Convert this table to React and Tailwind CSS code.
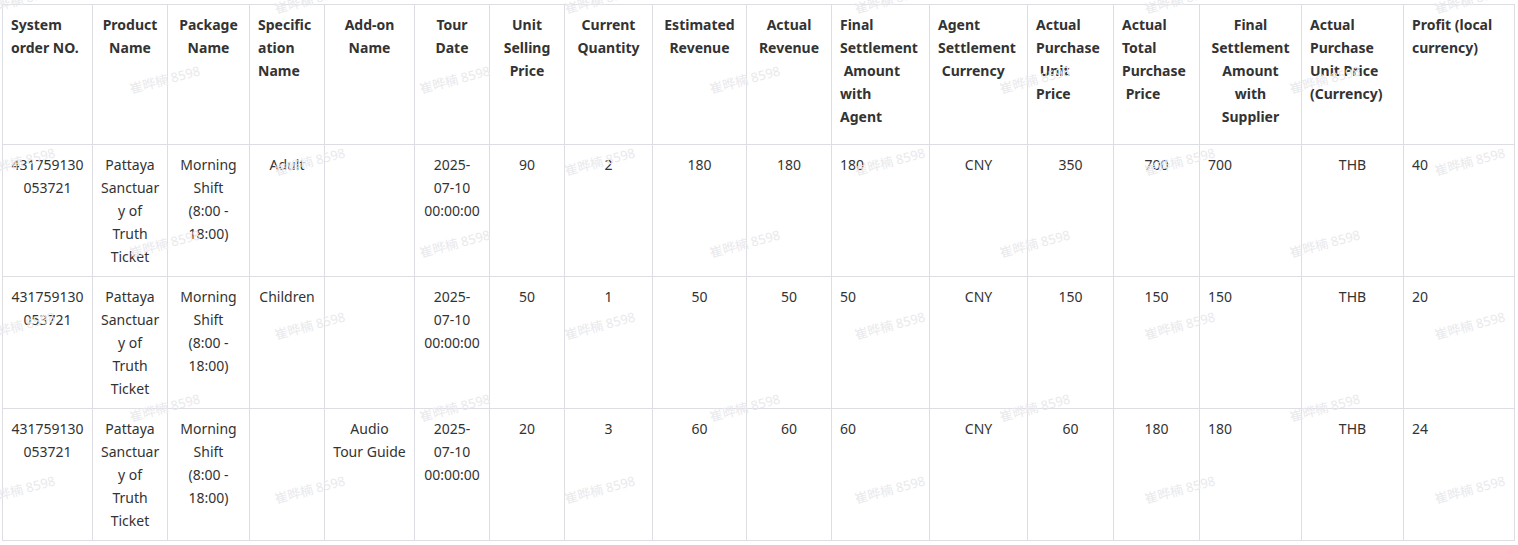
const widths = ["w-[90px]", "w-[75px]", "w-[82px]", "w-[75px]", "w-[90px]", "w-[75px]", "w-[75px]", "w-[88px]", "w-[94px]", "w-[85px]", "w-[98px]", "w-[98px]", "w-[86px]", "w-[86px]", "w-[102px]", "w-[102px]", "w-[111px]"];

const headers = [
    { lines: ["System", "order NO."], align: "left" },
    { lines: ["Product", "Name"], align: "center" },
    { lines: ["Package", "Name"], align: "center" },
    { lines: ["Specific", "ation", "Name"], align: "left" },
    { lines: ["Add-on", "Name"], align: "center" },
    { lines: ["Tour", "Date"], align: "center" },
    { lines: ["Unit", "Selling", "Price"], align: "center" },
    { lines: ["Current", "Quantity"], align: "center" },
    { lines: ["Estimated", "Revenue"], align: "center" },
    { lines: ["Actual", "Revenue"], align: "center" },
    { lines: ["Final", "Settlement", "\u00a0Amount", "with", "Agent"], align: "left" },
    { lines: ["Agent", "Settlement", "\u00a0Currency"], align: "left" },
    { lines: ["Actual", "Purchase", "\u00a0Unit", "Price"], align: "left" },
    { lines: ["Actual", "Total", "Purchase", "\u00a0Price"], align: "left" },
    { lines: ["Final", "Settlement", "Amount", "with", "Supplier"], align: "center" },
    { lines: ["Actual", "Purchase", "Unit Price", "(Currency)"], align: "left" },
    { lines: ["Profit (local", "currency)"], align: "left" },
];

// body alignment per column
const bodyAlign = ["c", "c", "c", "c", "c", "c", "c", "c", "c", "c", "l", "c", "c", "c", "l", "c", "l"];

const orderNo = ["431759130", "053721"];
const product = ["Pattaya", "Sanctuar", "y of", "Truth", "Ticket"];
const pkg = ["Morning", "Shift", "(8:00 -", "18:00)"];
const tourDate = ["2025-", "07-10", "00:00:00"];

const rows = [
    [orderNo, product, pkg, ["Adult"], [], tourDate, ["90"], ["2"], ["180"], ["180"], ["180"], ["CNY"], ["350"], ["700"], ["700"], ["THB"], ["40"]],
    [orderNo, product, pkg, ["Children"], [], tourDate, ["50"], ["1"], ["50"], ["50"], ["50"], ["CNY"], ["150"], ["150"], ["150"], ["THB"], ["20"]],
    [orderNo, product, pkg, [], ["Audio", "Tour Guide"], tourDate, ["20"], ["3"], ["60"], ["60"], ["60"], ["CNY"], ["60"], ["180"], ["180"], ["THB"], ["24"]],
];

function Lines({ lines }) {
    return lines.map((l, i) => (
        <div key={i} className="whitespace-pre">
            {l}
        </div>
    ));
}

function Watermarks() {
    const marks = [];
    const ysA = [0, 162, 326, 490];
    const ysB = [80, 244, 408];
    ysA.forEach((y) => {
        for (let x = 20; x < 1560; x += 290) marks.push([x, y]);
    });
    ysB.forEach((y) => {
        for (let x = 165; x < 1560; x += 290) marks.push([x, y]);
    });
    return (
        <div className="pointer-events-none absolute inset-0 overflow-hidden">
            {marks.map(([x, y], i) => (
                <div
                    key={i}
                    className="absolute -translate-x-1/2 -translate-y-1/2 -rotate-[15deg] whitespace-nowrap text-[13px] text-[#e9e9ec]"
                    style={{ left: x, top: y }}
                >
                    崔晔楠 8598
                </div>
            ))}
        </div>
    );
}

export default function App() {
    return (
        <div
            className="relative h-[545px] w-[1518px] overflow-hidden bg-white pl-[2px] pt-[4px] text-[14px] leading-[23px] text-[#333]"
            style={{ fontFamily: '"Noto Sans", "Noto Sans CJK SC", sans-serif' }}
        >
            <table className="w-[1513px] table-fixed border-collapse">
                <colgroup>
                    {widths.map((w, i) => (
                        <col key={i} className={w} />
                    ))}
                </colgroup>
                <thead>
                    <tr className="h-[140px]">
                        {headers.map((h, i) => (
                            <th
                                key={i}
                                className={`border border-[#dcdee3] px-2 pt-2 align-top font-bold ${h.align === "left" ? "text-left" : "text-center"}`}
                            >
                                <Lines lines={h.lines} />
                            </th>
                        ))}
                    </tr>
                </thead>
                <tbody>
                    {rows.map((r, ri) => (
                        <tr key={ri} className="h-[132px]">
                            {r.map((cell, ci) => (
                                <td
                                    key={ci}
                                    className={`border border-[#dcdee3] px-2 pt-2 align-top ${bodyAlign[ci] === "l" ? "text-left" : "text-center"}`}
                                >
                                    <Lines lines={cell} />
                                </td>
                            ))}
                        </tr>
                    ))}
                </tbody>
            </table>
            <Watermarks />
        </div>
    );
}
